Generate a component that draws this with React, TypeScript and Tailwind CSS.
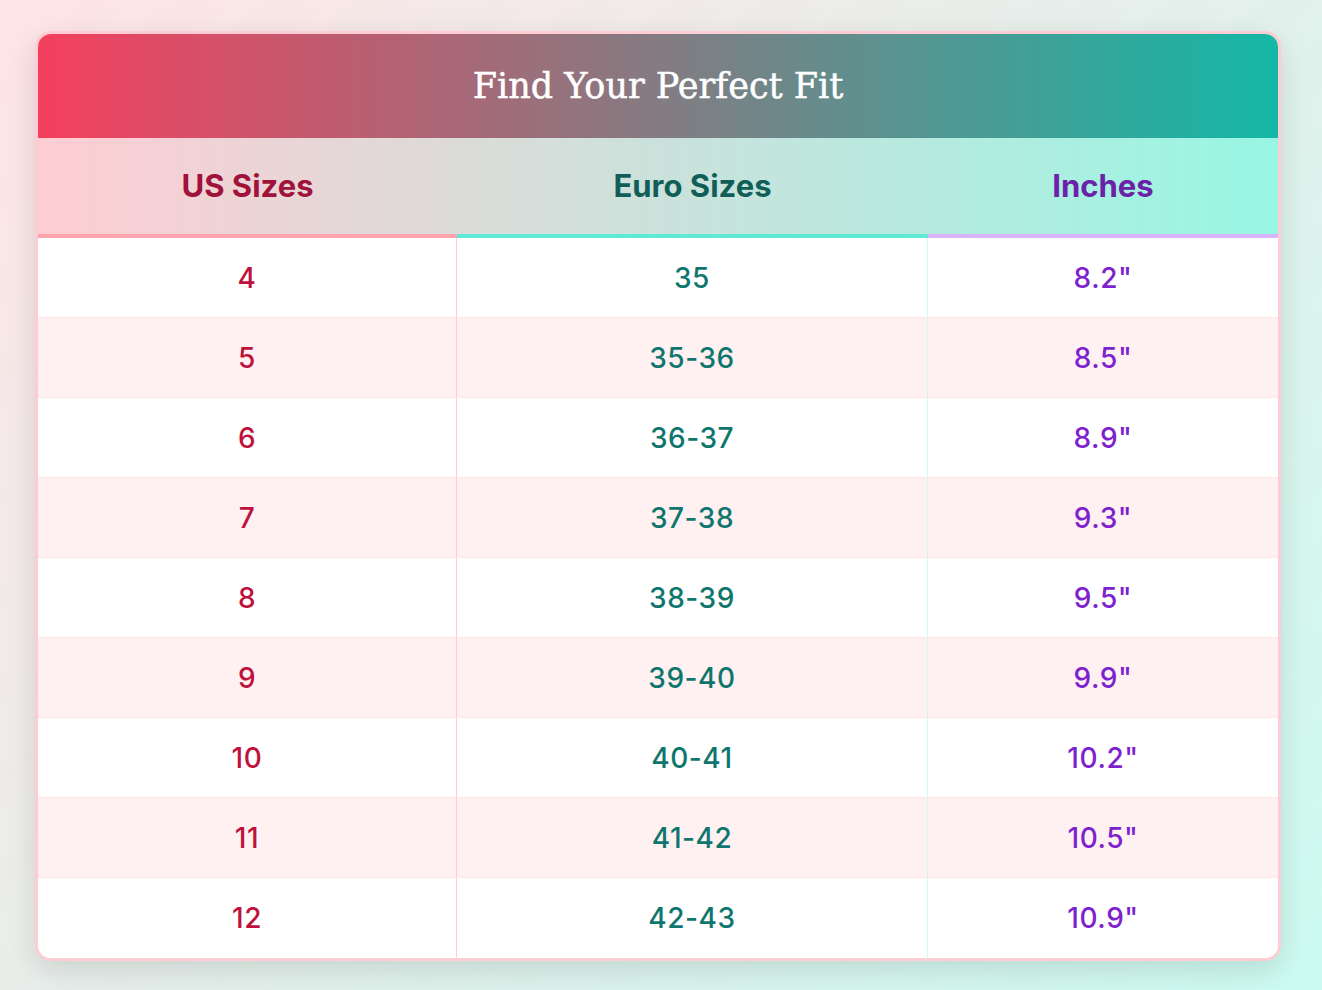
import React from 'react'

const sizes = [
  { us: '4', euro: '35', inches: '8.2"' },
  { us: '5', euro: '35-36', inches: '8.5"' },
  { us: '6', euro: '36-37', inches: '8.9"' },
  { us: '7', euro: '37-38', inches: '9.3"' },
  { us: '8', euro: '38-39', inches: '9.5"' },
  { us: '9', euro: '39-40', inches: '9.9"' },
  { us: '10', euro: '40-41', inches: '10.2"' },
  { us: '11', euro: '41-42', inches: '10.5"' },
  { us: '12', euro: '42-43', inches: '10.9"' },
]

export default function App() {
  return (
    <div className="min-h-screen bg-[linear-gradient(135deg,#ffe4e6,#ccfbf1)] pl-[35px] pt-[31px] pb-[29px]">
      <div className="w-[1246px] rounded-2xl border-[3px] border-[#fecdd3] bg-white shadow-[0_10px_30px_rgba(0,0,0,0.12)] overflow-hidden font-['Inter',sans-serif]">
        {/* Title */}
        <div className="h-[104px] flex items-center justify-center bg-[linear-gradient(to_right,#f43f5e,#14b8a6)]">
          <h1 className="text-white text-[35px] font-['DejaVu_Serif',serif] leading-none [-webkit-text-stroke:0.5px_white]">Find Your Perfect Fit</h1>
        </div>

        {/* Column headers */}
        <div className="grid grid-cols-[419px_471px_350px] bg-[linear-gradient(to_right,#fecdd3,#99f6e4)]">
          <div className="h-[100px] flex items-center justify-center border-b-4 border-[#fda4af] text-[31px] font-bold text-[#9f1239]">US Sizes</div>
          <div className="h-[100px] flex items-center justify-center border-b-4 border-[#5eead4] text-[31px] font-bold text-[#115e59]">Euro Sizes</div>
          <div className="h-[100px] flex items-center justify-center border-b-4 border-[#d8b4fe] text-[31px] font-bold text-[#6b21a8]">Inches</div>
        </div>

        {/* Rows */}
        {sizes.map((row, i) => (
          <div
            key={row.us}
            className={`grid grid-cols-[419px_471px_350px] h-20 text-[28px] font-medium tracking-[0.02em] ${i % 2 === 1 ? 'bg-[#fff1f2]' : 'bg-white'} ${i < sizes.length - 1 ? 'border-b border-[#ffe4e6]' : ''}`}
          >
            <div className="flex items-center justify-center border-r border-[#fecdd3] text-[#be123c]">{row.us}</div>
            <div className="flex items-center justify-center border-r border-[#ccfbf1] text-[#0f766e]">{row.euro}</div>
            <div className="flex items-center justify-center text-[#7e22ce]">{row.inches}</div>
          </div>
        ))}
      </div>
    </div>
  )
}
